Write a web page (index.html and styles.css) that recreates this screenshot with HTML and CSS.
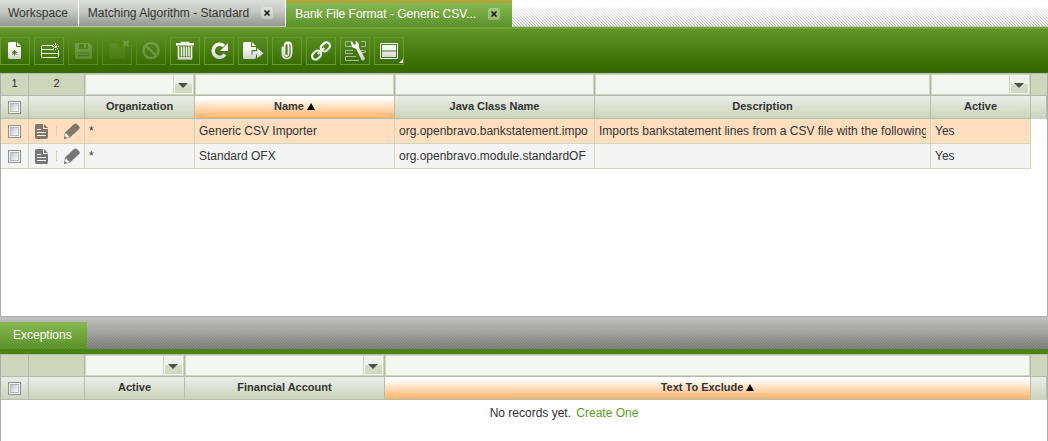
FILE: index.html
```html
<!DOCTYPE html>
<html lang="en">
  <head>
    <meta charset="UTF-8" />
    <meta name="viewport" content="width=device-width, initial-scale=1.0" />
    <title>Bank File Format</title>
    <link rel="stylesheet" href="styles.css" />
  </head>

  <body>
    <!-- shared icons and gradients -->
    <svg class="defs" width="0" height="0" aria-hidden="true">
      <defs>
        <linearGradient id="silver" gradientUnits="userSpaceOnUse" x1="0" y1="4" x2="0" y2="24">
          <stop offset="0" stop-color="#ffffff" />
          <stop offset="0.35" stop-color="#f6f6f6" />
          <stop offset="1" stop-color="#c4c4c4" />
        </linearGradient>
        <symbol id="i-doc" viewBox="0 0 15 16">
          <path d="M2.500 1H9v5h5v7.500Q14 16 12.500 16H2.500Q1 16 1 14V2.500Q1 1 2.500 1z" />
          <path d="M10 1l4 4h-4z" />
          <path d="M3 6.500h4M3 9.500h9M3 12.500h9" stroke="#f4f4f4" fill="none" />
        </symbol>
        <symbol id="i-pencil" viewBox="0 0 16 16">
          <path d="M1 9.500L10 1Q11.500 0 13 1l2.300 2.500Q16.400 5 15 6.200L6 14.500 0 16z" />
          <path d="M1.800 10l3.700 4-3.200 1-1.600-1.500z" fill="#fff" />
          <path d="M0 16l.9-3 2 2z" />
        </symbol>
      </defs>
    </svg>

    <nav class="tabs">
      <div class="tab"><a href="#">Workspace</a></div>
      <div class="tab">
        <a href="#">Matching Algorithm - Standard</a>
        <button class="close" aria-label="Close"><svg width="6" height="6"><path d="M.5 .5l5 5M5.500 .5l-5 5" /></svg></button>
      </div>
      <div class="tab active">
        <a href="#">Bank File Format - Generic CSV...</a>
        <button class="close" aria-label="Close"><svg width="6" height="6"><path d="M.5 .5l5 5M5.500 .5l-5 5" /></svg></button>
      </div>
    </nav>

    <div class="toolbar">
      <button aria-label="New in form">
        <svg width="28" height="26"><path class="f" d="M8.500 4H15v5h5v10.500Q20 21 18.500 21h-10Q7 21 7 19.500v-14Q7 4 8.500 4zM16 4l4 4h-4z" /><path d="M13.500 12v5.500M10.800 14.700h5.500M11.500 12.800l4 4M15.500 12.800l-4 4" stroke="#48790f" /></svg>
      </button>
      <button aria-label="New in grid">
        <svg width="28" height="26"><path class="s" d="M18 7.500H7.500Q6.500 7.500 6.500 8.500v10q0 1 1 1h15q1 0 1-1V12M7 11.500h12M7 15.500h16" /><path class="s" d="M20.500 5v7M17.200 8.500h6.800M18 6l5 5M23 6l-5 5" stroke-dasharray="2 1" /></svg>
      </button>
      <button aria-label="Save" disabled>
        <svg width="28" height="26"><path class="f" fill-rule="evenodd" d="M7.500 5H20l3 3v11.500Q23 21 21.500 21h-14Q6 21 6 19.500v-13Q6 5 7.500 5zM10 6v5h9V6h-2v4h-2V6zM9 14.500v1h11v-1zM9 17v1h11v-1z" /></svg>
      </button>
      <button aria-label="Save and close" disabled>
        <svg width="28" height="26"><path class="f" opacity=".3" d="M7.500 5H16v4h6v10.500Q22 21 20.500 21h-13Q6 21 6 19.500v-13Q6 5 7.500 5z" /><path d="M20.500 3l5 5M25.500 3l-5 5" class="thick" stroke="#fff" /></svg>
      </button>
      <button aria-label="Undo" disabled>
        <svg width="28" height="26"><circle cx="14" cy="12.500" r="7.500" stroke="#fff" stroke-width="2.500" fill="none" /><path d="M9 8l10 9.500" stroke="#fff" stroke-width="2.500" /></svg>
      </button>
      <button aria-label="Delete">
        <svg width="28" height="26"><path class="s" d="M10.500 5.500v-1h7v1" stroke-width="1.500" /><path class="f" d="M5 5h18v2.500H5z" /><path class="s" stroke-width="1.600" d="M7.500 8v12.500h13V8M10.500 8.500v10M13 8.500v10M15.500 8.500v10M18 8.500v10" /><path class="f" d="M7 19h14v2.500H7z" /></svg>
      </button>
      <button aria-label="Refresh">
        <svg width="28" height="26"><path d="M20 16.500A6.500 6.500 0 1 1 19 8" stroke="url(#silver)" stroke-width="3.500" fill="none" /><path class="f" d="M23 5v8h-8z" /></svg>
      </button>
      <button aria-label="Export">
        <svg width="28" height="26"><path class="f" d="M5.500 4H12v5h5v3h-4.500v4.500H17v3q0 1.500-1.500 1.500h-10Q4 21 4 19.500v-14Q4 4 5.500 4zM13 4l4 4h-4zM13.500 13.200H18V10l6.500 5.200L18 20.500v-4h-4.500z" /></svg>
      </button>
      <button aria-label="Attachments">
        <svg width="28" height="26"><path d="M11.500 9v7q0 2 2 2t2-2V8q0-3.500-3-3.500M9.500 8.500V16q0 4.500 4.300 4.500T18.500 16V8.500q0-4-3.500-4T11.500 9" stroke="url(#silver)" stroke-width="1.800" fill="none" /></svg>
      </button>
      <button aria-label="Linked items">
        <svg width="28" height="26"><g transform="rotate(-43 14 13)" stroke="url(#silver)" fill="none" stroke-width="2.200"><rect x="3" y="9.500" width="10" height="7" rx="3.500" /><rect x="15" y="9.500" width="10" height="7" rx="3.500" /><path d="M9.500 13h9" /></g></svg>
      </button>
      <button aria-label="Processes">
        <svg width="28" height="26"><g stroke="#a9bb96" fill="none"><path d="M10 3.500H4.500v5H12M20 3.500h4.500v5H20M12 12.500H4.500v3H12M20 12.500h4.500v2H20M15 18.500H4.500v4H18" /></g><path class="f" d="M10 3.500q2.500 0 3 3.500l2-1-.5-3.200q4.500 2 3.300 6.200L24 20.500q-1 3-3.500 1.500L15 10.500Q9.500 10 10 3.500z" /></svg>
      </button>
      <button class="view" aria-label="View">
        <svg width="28" height="26"><path class="s" d="M5.500 5.500h17v15h-17z" /><path class="f" d="M7 7h14v5.500H7zM7 13.500h14V19H7z" /></svg>
      </button>
    </div>

    <section class="pane main">
      <table>
        <colgroup>
          <col class="check" /><col class="acts" /><col class="org" /><col class="name" /><col class="name" /><col /><col class="yn" /><col class="end" />
        </colgroup>
        <thead>
          <tr class="filter">
            <td>1</td>
            <td>2</td>
            <td><label class="pick"><select aria-label="Organization"><option></option></select></label></td>
            <td><input type="text" aria-label="Name" /></td>
            <td><input type="text" aria-label="Java Class Name" /></td>
            <td><input type="text" aria-label="Description" /></td>
            <td><label class="pick"><select aria-label="Active"><option></option></select></label></td>
            <td></td>
          </tr>
          <tr class="head">
            <th><input type="checkbox" aria-label="Select all" /></th>
            <th></th>
            <th>Organization</th>
            <th class="sorted">Name<i class="up"></i></th>
            <th>Java Class Name</th>
            <th>Description</th>
            <th>Active</th>
            <th></th>
          </tr>
        </thead>
        <tbody>
          <tr class="selected">
            <td><input type="checkbox" aria-label="Select Generic CSV Importer" /></td>
            <td>
              <div class="actions">
                <button aria-label="Open"><svg width="15" height="16"><use href="#i-doc" /></svg></button>
                <button aria-label="Edit"><svg width="16" height="16"><use href="#i-pencil" /></svg></button>
              </div>
            </td>
            <td><div class="cell">*</div></td>
            <td><div class="cell">Generic CSV Importer</div></td>
            <td><div class="cell">org.openbravo.bankstatement.impo</div></td>
            <td><div class="cell">Imports bankstatement lines from a CSV file with the following</div></td>
            <td><div class="cell">Yes</div></td>
            <td></td>
          </tr>
          <tr>
            <td><input type="checkbox" aria-label="Select Standard OFX" /></td>
            <td>
              <div class="actions">
                <button aria-label="Open"><svg width="15" height="16"><use href="#i-doc" /></svg></button>
                <button aria-label="Edit"><svg width="16" height="16"><use href="#i-pencil" /></svg></button>
              </div>
            </td>
            <td><div class="cell">*</div></td>
            <td><div class="cell">Standard OFX</div></td>
            <td><div class="cell">org.openbravo.module.standardOF</div></td>
            <td></td>
            <td><div class="cell">Yes</div></td>
            <td></td>
          </tr>
        </tbody>
      </table>
    </section>

    <nav class="subtabs">
      <a href="#">Exceptions</a>
    </nav>

    <section class="pane child">
      <table>
        <colgroup>
          <col class="check" /><col class="acts" /><col class="yn" /><col class="name" /><col /><col class="end" />
        </colgroup>
        <thead>
          <tr class="filter">
            <td></td>
            <td></td>
            <td><label class="pick"><select aria-label="Active"><option></option></select></label></td>
            <td><label class="pick"><select aria-label="Financial Account"><option></option></select></label></td>
            <td><input type="text" aria-label="Text To Exclude" /></td>
            <td></td>
          </tr>
          <tr class="head">
            <th><input type="checkbox" aria-label="Select all" /></th>
            <th></th>
            <th>Active</th>
            <th>Financial Account</th>
            <th class="sorted">Text To Exclude<i class="up"></i></th>
            <th></th>
          </tr>
        </thead>
      </table>
      <p class="empty">No records yet. <a href="#">Create One</a></p>
    </section>
  </body>
</html>
```
FILE: styles.css
```css
*,
*::before,
*::after {
  margin: 0;
  padding: 0;
  box-sizing: border-box;
}

body {
  min-height: 100vh;
  display: flex;
  flex-direction: column;
  background-color: #fff;
  color: #333;
  font-family: "Liberation Sans", Arial, sans-serif;
  font-size: 12px;
}

a {
  text-decoration: none;
}

button {
  border: none;
  background: none;
  cursor: pointer;
}

svg {
  display: block;
}

.defs {
  position: absolute;
}

/* window tabs */
.tabs {
  height: 27px;
  display: flex;
  border-bottom: 1px solid #c3c6bd;
  background: linear-gradient(#fff 20%, transparent),
    linear-gradient(45deg, transparent 40%, #b4b4b4 40% 60%, transparent 60%) 0 0 / 3px 3px,
    #f0f0f0;
}

.tab {
  display: flex;
  align-items: center;
  gap: 12px;
  padding: 0 10px 0 8px;
  border-right: 1px solid #fff;
  background: linear-gradient(#dcded8, #c9ccc4 40%, #93968d);
}

.tab + .tab {
  padding: 0 12px 0 9px;
}

.tab a {
  color: #333;
}

.tab.active {
  margin-bottom: -1px;
  border-top: 1px solid #ff8c1f;
  border-right: none;
  background: linear-gradient(#87b850 10%, transparent),
    linear-gradient(45deg, transparent 40%, #4f8420 40% 60%, transparent 60%) 0 0 / 3px 3px,
    #619730;
}

.tab.active a {
  color: #fff;
}

.close {
  width: 12px;
  height: 12px;
  display: flex;
  align-items: center;
  justify-content: center;
  border-radius: 3px;
  background-color: rgba(255, 255, 255, 0.3);
}

.close path {
  stroke: #111;
  stroke-width: 1.5;
}

/* toolbar */
.toolbar {
  height: 46px;
  display: flex;
  align-items: center;
  gap: 4px;
  border-top: 2px solid #71a535;
  background: linear-gradient(#629629, #366b00 85%, #366b00);
}

.toolbar button {
  width: 30px;
  height: 28px;
  border: 1px solid #659a2c;
}

.toolbar button:disabled {
  border-color: #588c20;
}

.toolbar button:disabled svg {
  opacity: 0.2;
}

.toolbar .f {
  fill: url(#silver);
}

.toolbar .s {
  fill: none;
  stroke: #f0f2ee;
}

.toolbar .thick {
  stroke-width: 2;
}

.toolbar .view {
  position: relative;
}

.view::after {
  content: "";
  position: absolute;
  right: 0;
  bottom: 1px;
  border-left: 4px solid transparent;
  border-bottom: 4px solid #fff;
}

/* grids */
.pane {
  border: 1px solid #ababab;
  border-top-color: #b5bca9;
}

.main {
  min-height: 244px;
}

.child {
  flex: 1;
  border-bottom: none;
}

table {
  width: 100%;
  table-layout: fixed;
  border-collapse: separate;
  border-spacing: 0;
}

.check {
  width: 28px;
}

.acts {
  width: 56px;
}

.org {
  width: 110px;
}

.name {
  width: 200px;
}

.yn {
  width: 100px;
}

.end {
  width: 16px;
}

.filter td {
  height: 22px;
  border-right: 1px solid #b4b8b0;
  border-bottom: 1px solid #b4b8b0;
  background-color: #cdd7bb;
  font-size: 11px;
  line-height: 18px;
  text-align: center;
  vertical-align: top;
}

.filter td:last-child {
  border-right: none;
}

.filter input,
.filter select {
  display: block;
  width: 100%;
  height: 21px;
  border: 1px solid #cdd7bb;
  border-radius: 0;
  outline: none;
  background-color: #f4f7ef;
  appearance: none;
}

.pick {
  display: block;
  position: relative;
}

.pick::before {
  content: "";
  position: absolute;
  top: 1px;
  right: 1px;
  width: 20px;
  height: 19px;
  border: 1px solid #f4f7ef;
  border-left: 1px solid #cdd7bb;
  background: linear-gradient(#eef1e8 45%, #d6ddc9 45%, #d0d9bf);
  box-shadow: inset 1px 0 #f4f7ef;
  pointer-events: none;
}

.pick::after {
  content: "";
  position: absolute;
  top: 9px;
  right: 6px;
  border: 5px solid transparent;
  border-top-color: #4c4f46;
  border-bottom: none;
  pointer-events: none;
}

.head th {
  height: 23px;
  padding-bottom: 2px;
  border-right: 1px solid #b8bdb4;
  border-bottom: 1px solid #b8bdb4;
  background: linear-gradient(#ebeee8, #cad4ba);
  font-size: 11px;
  line-height: 18px;
  text-align: center;
}

.head th:first-child {
  padding-bottom: 0;
}

.head th:last-child {
  border-bottom-color: #cdd7bb;
}

.head .sorted {
  background: linear-gradient(#fff 10%, #ffb469);
}

.up {
  display: inline-block;
  margin-left: 3px;
  border: 4px solid transparent;
  border-top: none;
  border-bottom: 7px solid #000;
}

input[type="checkbox"] {
  display: block;
  width: 13px;
  height: 13px;
  margin-left: 7px;
  border: 1px solid #8e8f8f;
  outline: 1px solid #b3b7b9;
  outline-offset: -3px;
  background: linear-gradient(135deg, #c3c9d1 25%, #f6f6f6 75%);
  box-shadow: inset 0 0 0 1px #f4f4f4;
  appearance: none;
}

tbody td {
  height: 25px;
  border-right: 1px solid #cdd7bb;
  border-bottom: 1px solid #cdd7bb;
  background-color: #f4f4f4;
}

tbody .selected td {
  background-color: #ffdfbf;
}

tbody td:last-child,
tbody .selected td:last-child {
  border: none;
  background: none;
}

.cell {
  margin: 0 4px;
  overflow: hidden;
  white-space: nowrap;
}

.actions {
  display: flex;
  justify-content: space-between;
  padding: 0 4px 0 5px;
  background: linear-gradient(#cdd7bb, #cdd7bb) 27px center / 1px 10px no-repeat;
}

.actions svg {
  fill: #777;
}

.selected .actions svg {
  fill: #83776b;
}

/* child tabs */
.subtabs {
  height: 37px;
  display: flex;
  align-items: flex-end;
  border-bottom: 5px solid #4c8315;
  background: linear-gradient(#c0c0c0, rgba(176, 176, 174, 0.9) 35%, transparent),
    linear-gradient(45deg, transparent 40%, #6c6c6a 40% 60%, transparent 60%) 0 0 / 3px 3px,
    #868684;
}

.subtabs a {
  padding: 0 15px 0 13px;
  color: #fff;
  line-height: 27px;
  background: linear-gradient(#83b54b 10%, transparent),
    linear-gradient(45deg, transparent 40%, #4f8420 40% 60%, transparent 60%) 0 0 / 3px 3px,
    #619730;
}

/* centred on the data columns */
.empty {
  padding: 6px 0 0 80px;
  text-align: center;
  line-height: 14px;
}

.empty a {
  margin-left: 2px;
  color: #5a9e1f;
}
```
